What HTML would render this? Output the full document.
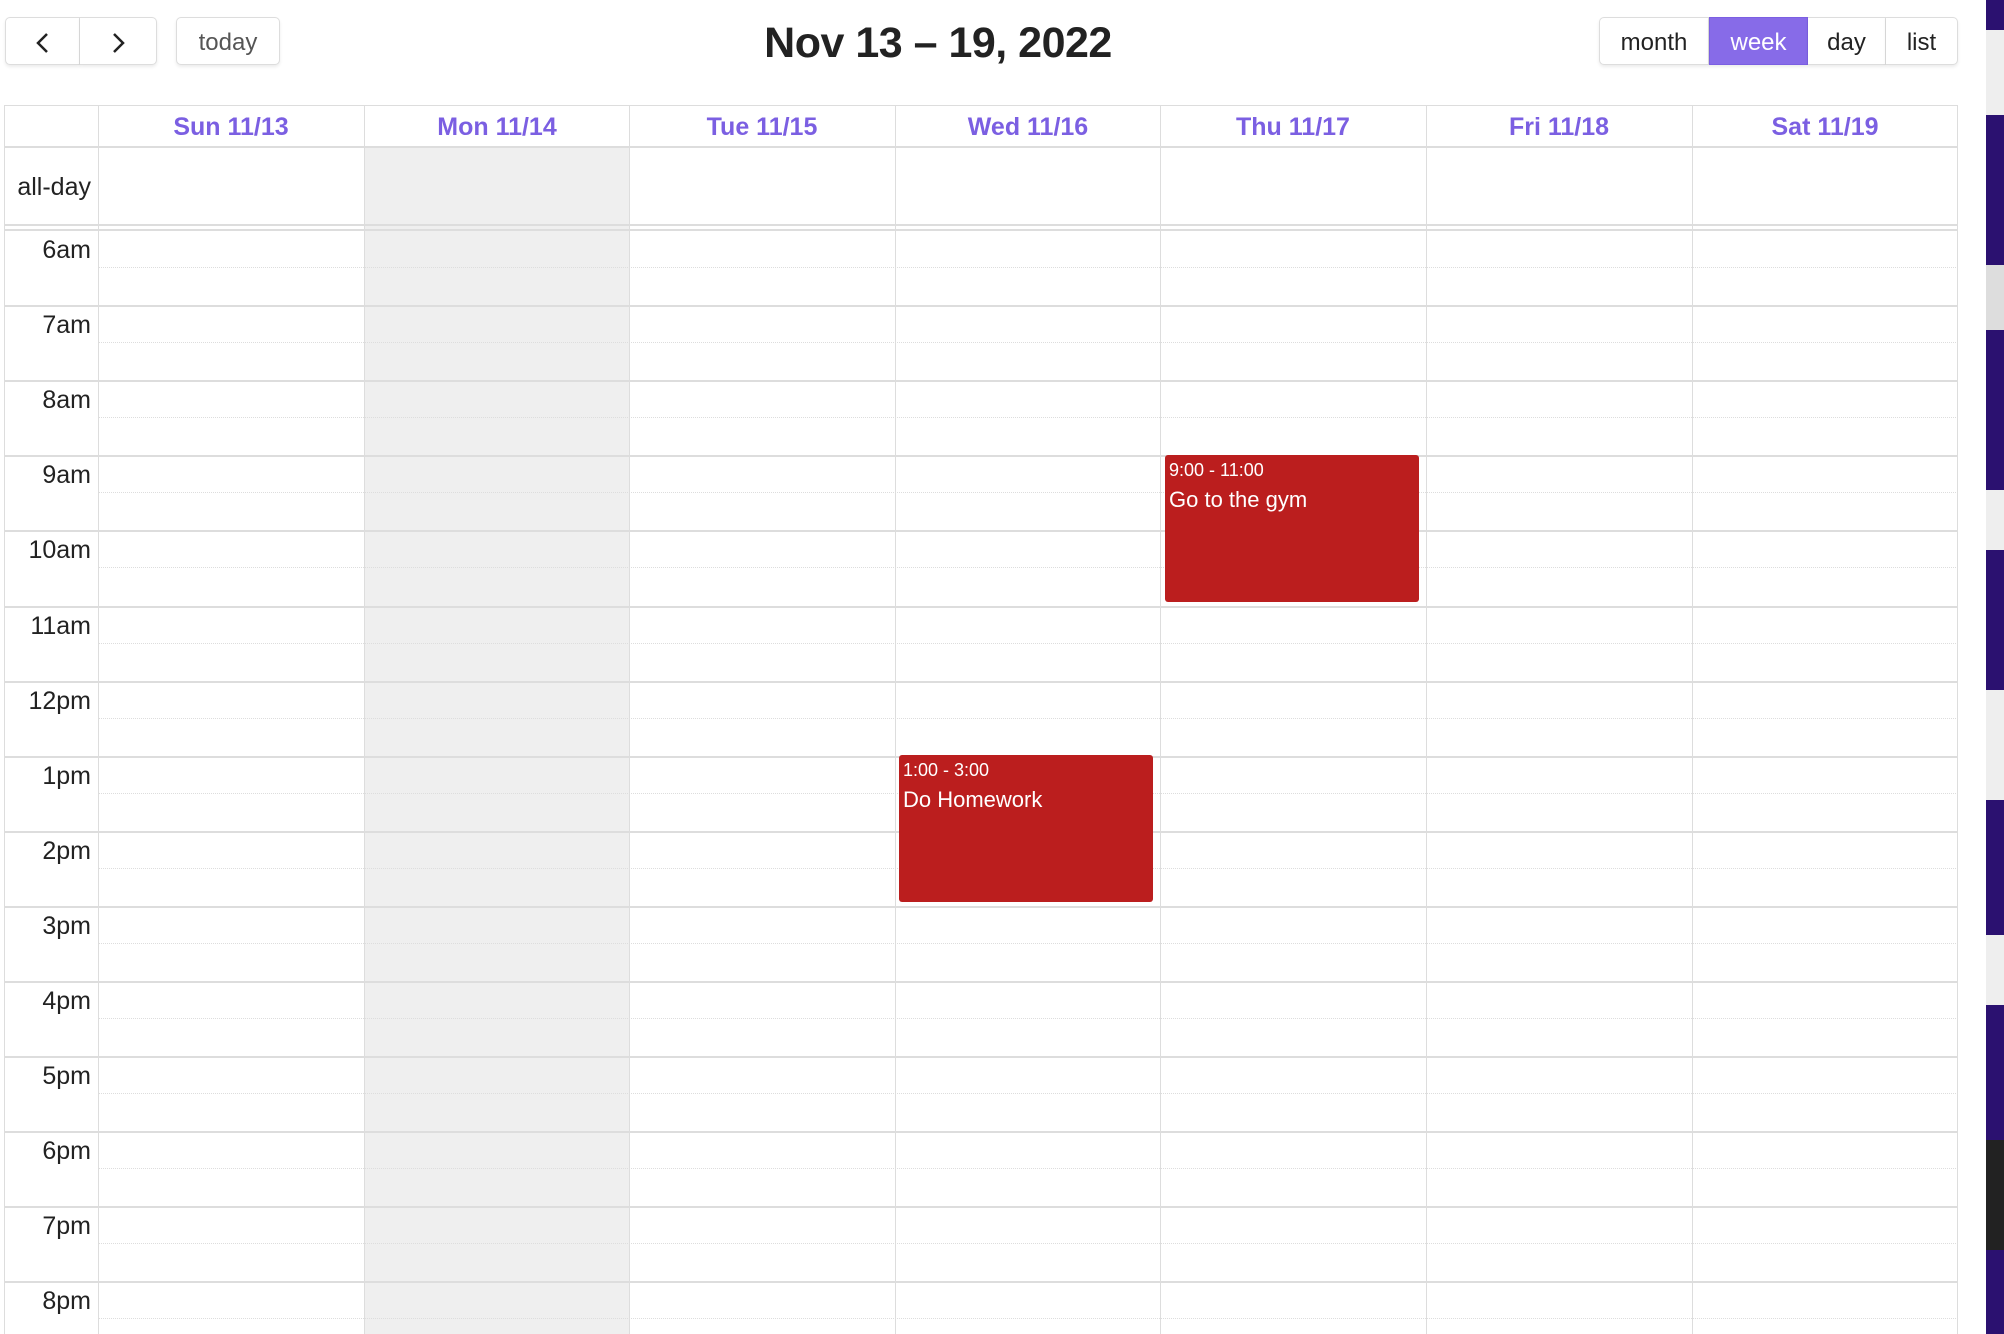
<!DOCTYPE html>
<html style="height:1334px;overflow:hidden"><head><style>
body{margin:0;width:2004px;height:1334px;overflow:hidden;background:#fff;font-family:"Liberation Sans",sans-serif;position:relative}
.btn{position:absolute;top:17px;height:48px;border:1px solid #ddd;background:#fff;box-shadow:0 2px 3px rgba(0,0,0,.08);box-sizing:border-box;display:flex;align-items:center;justify-content:center;font-size:24px;color:#222;padding-top:3px}
.title{position:absolute;top:19px;left:0;width:1876px;text-align:center;font-size:43px;font-weight:bold;color:#222;letter-spacing:-0.5px}
.g{position:absolute;background:#ddd}
.hd{position:absolute;top:106px;height:42px;line-height:42px;text-align:center;color:#7b5fe2;font-weight:bold;font-size:25px;width:266px}
.lbl{position:absolute;left:4px;width:87px;text-align:right;font-size:25px;color:#222}
.ev{position:absolute;background:#bb1e1e;border-radius:3px;color:#fff;padding:5px 4px}
.ev .t{font-size:18px}.ev .n{font-size:22px;margin-top:6px}
</style></head><body>
<div class="btn" style="left:5px;width:75px;border-radius:5px 0 0 5px"><svg width="20" height="24"><path d="M14 3 L5 12 L14 21" stroke="#222" stroke-width="2.5" fill="none"/></svg></div>
<div class="btn" style="left:80px;width:77px;border-radius:0 5px 5px 0;border-left:none"><svg width="20" height="24"><path d="M6 3 L15 12 L6 21" stroke="#222" stroke-width="2.5" fill="none"/></svg></div>
<div class="btn" style="left:176px;width:104px;border-radius:5px;color:#555">today</div>
<div class="title">Nov 13 – 19, 2022</div>
<div class="btn" style="left:1599px;width:110px;border-radius:5px 0 0 5px">month</div>
<div class="btn" style="left:1709px;width:99px;background:#876be8;border-color:#7b5fe2;color:#fff">week</div>
<div class="btn" style="left:1808px;width:78px;border-left:none">day</div>
<div class="btn" style="left:1886px;width:72px;border-radius:0 5px 5px 0;border-left:none">list</div>
<div style="position:absolute;left:364px;top:147px;width:265px;height:1187px;background:#efefef"></div>
<div style="position:absolute;left:1986px;top:0;width:18px;height:1334px;background:#2b1170"></div>
<div style="position:absolute;left:1986px;top:30px;width:18px;height:85px;background:#eee"></div>
<div style="position:absolute;left:1986px;top:265px;width:18px;height:65px;background:#ddd"></div>
<div style="position:absolute;left:1986px;top:490px;width:18px;height:60px;background:#eee"></div>
<div style="position:absolute;left:1986px;top:690px;width:18px;height:110px;background:#eee"></div>
<div style="position:absolute;left:1986px;top:935px;width:18px;height:70px;background:#eee"></div>
<div style="position:absolute;left:1986px;top:1140px;width:18px;height:110px;background:#222"></div>
<div id="grid"></div>
<div class="hd" style="left:98px">Sun 11/13</div>
<div class="hd" style="left:364px">Mon 11/14</div>
<div class="hd" style="left:629px">Tue 11/15</div>
<div class="hd" style="left:895px">Wed 11/16</div>
<div class="hd" style="left:1160px">Thu 11/17</div>
<div class="hd" style="left:1426px">Fri 11/18</div>
<div class="hd" style="left:1692px">Sat 11/19</div>
<div class="lbl" style="top:173px">all-day</div>
<div class="ev" style="left:1165px;top:455px;width:246px;height:137px"><div class="t">9:00 - 11:00</div><div class="n">Go to the gym</div></div>
<div class="ev" style="left:899px;top:755px;width:246px;height:137px"><div class="t">1:00 - 3:00</div><div class="n">Do Homework</div></div>
<script>
var g=document.getElementById('grid'),h='';
function L(x,y,w,hh,c){h+='<div class="g" style="left:'+x+'px;top:'+y+'px;width:'+w+'px;height:'+hh+'px;'+(c?'background:'+c:'')+'"></div>';}
L(4,105,1954,1);L(4,146,1954,2);L(4,224,1954,2);L(4,229,1954,2);
var xs=[4,98,364,629,895,1160,1426,1692,1957];
xs.forEach(function(x){L(x,105,1,1229);});
var labels=['6am','7am','8am','9am','10am','11am','12pm','1pm','2pm','3pm','4pm','5pm','6pm','7pm','8pm'];
for(var i=0;i<15;i++){var y=230+i*75.1;
 if(i>0)L(4,Math.round(y),1954,2);
 h+='<div style="position:absolute;left:98px;top:'+Math.round(y+37)+'px;width:1860px;border-top:1px dotted #ddd"></div>';
 h+='<div class="lbl" style="top:'+Math.round(y+6)+'px">'+labels[i]+'</div>';}
g.innerHTML=h;
</script>
</body></html>
